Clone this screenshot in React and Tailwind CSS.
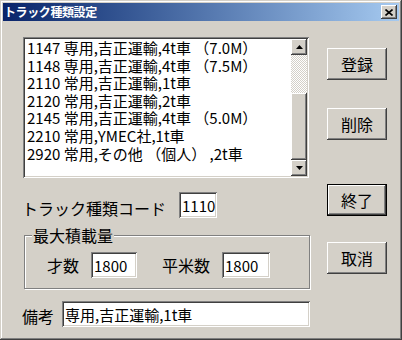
import React from "react";

const sunken =
  "shadow-[inset_1px_1px_0_#808080,inset_-1px_-1px_0_#ffffff,inset_2px_2px_0_#404040,inset_-2px_-2px_0_#d4d0c8]";
const raised =
  "shadow-[inset_-1px_-1px_0_#404040,inset_1px_1px_0_#ffffff,inset_-2px_-2px_0_#808080,inset_2px_2px_0_#d4d0c8]";

const items = [
  "1147 専用,吉正運輸,4t車 （7.0M）",
  "1148 専用,吉正運輸,4t車 （7.5M）",
  "2110 常用,吉正運輸,1t車",
  "2120 常用,吉正運輸,2t車",
  "2145 常用,吉正運輸,4t車 （5.0M）",
  "2210 常用,YMEC社,1t車",
  "2920 常用,その他 （個人） ,2t車",
];

function Field({ w, children }) {
  return (
    <div
      className={`${sunken} bg-white h-[26px] flex items-center pl-[3px] text-[15px] leading-none text-black ${w}`}
    >
      {children}
    </div>
  );
}

function Btn({ label, def, className }) {
  if (def) {
    return (
      <div className={`w-[60px] h-[32px] border border-black ${className}`}>
        <div className={`${raised} bg-[#d4d0c8] w-full h-full flex items-center justify-center text-[16px] leading-none`}>
          {label}
        </div>
      </div>
    );
  }
  return (
    <div
      className={`${raised} bg-[#d4d0c8] w-[60px] h-[32px] flex items-center justify-center text-[16px] leading-none ${className}`}
    >
      {label}
    </div>
  );
}

function Arrow({ up }) {
  return (
    <div className={`${raised} bg-[#d4d0c8] w-[16px] h-[16px] flex items-center justify-center`}>
      <svg width="7" height="4" viewBox="0 0 7 4">
        {up ? <polygon points="3.5,0 7,4 0,4" fill="#000" /> : <polygon points="0,0 7,0 3.5,4" fill="#000" />}
      </svg>
    </div>
  );
}

export default function App() {
  return (
    <div
      className="w-[402px] h-[340px] bg-[#d4d0c8] p-[3px] flex flex-col text-black shadow-[inset_-1px_-1px_0_#404040,inset_1px_1px_0_#d4d0c8,inset_-2px_-2px_0_#808080,inset_2px_2px_0_#ffffff]"
      style={{ fontFamily: '"Noto Sans CJK JP", "Noto Sans", sans-serif' }}
    >
      {/* title bar */}
      <div className="h-[18px] bg-linear-to-r from-[#0a246a] to-[#a6caf0] flex items-center justify-between pl-[1px] pr-[2px]">
        <span className="text-white font-bold text-[12px] leading-none tracking-[-0.4px]">トラック種類設定</span>
        <div className={`${raised} bg-[#d4d0c8] w-[16px] h-[14px] flex items-center justify-center`}>
          <svg width="8" height="7" viewBox="0 0 8 7">
            <path d="M0.5 0.5 L7.5 6.5 M7.5 0.5 L0.5 6.5" stroke="#000" strokeWidth="1.6" />
          </svg>
        </div>
      </div>

      {/* body */}
      <div className="flex flex-1">
        {/* left column */}
        <div className="w-[310px] flex flex-col pl-[20px]">
          {/* listbox */}
          <div className={`${sunken} mt-[16px] w-[286px] h-[141px] bg-white p-[2px] flex`}>
            <div className="flex-1 pl-[2px] text-[15px] leading-[17.6px] whitespace-nowrap">
              {items.map((t) => (
                <div key={t} className="h-[17.6px]">{t}</div>
              ))}
            </div>
            <div className="w-[16px] flex flex-col">
              <Arrow up />
              <div className="h-[38px] bg-[repeating-conic-gradient(#ffffff_0_25%,#d4d0c8_0_50%)] bg-[length:2px_2px]" />
              <div className={`${raised} bg-[#d4d0c8] flex-1`} />
              <Arrow />
            </div>
          </div>

          {/* code row */}
          <div className="flex items-end mt-[14px] -ml-[1px]">
            <div className="w-[157px] text-[16px] leading-none pb-[2px]">トラック種類コード</div>
            <Field w="w-[38px]">1110</Field>
          </div>

          {/* group box */}
          <div className="relative mt-[17px] ml-[1px] w-[286px] h-[54px] border border-[#808080] shadow-[inset_1px_1px_0_#ffffff,1px_1px_0_#ffffff]">
            <div className="absolute -top-[9px] left-[7px] bg-[#d4d0c8] px-[1px] text-[16px] leading-none">
              最大積載量
            </div>
            <div className="flex items-center mt-[16px] pl-[22px]">
              <span className="w-[44px] text-[16px] leading-none">才数</span>
              <Field w="w-[46px]">1800</Field>
              <span className="ml-[25px] w-[60px] text-[16px] leading-none">平米数</span>
              <Field w="w-[48px]">1800</Field>
            </div>
          </div>

          {/* remarks */}
          <div className="flex items-center mt-[12px] -ml-[1px]">
            <span className="w-[40px] text-[16px] leading-none pt-[3px]">備考</span>
            <Field w="w-[248px]">専用,吉正運輸,1t車</Field>
          </div>
        </div>

        {/* right column */}
        <div className="flex flex-col ml-[14px]">
          <Btn label="登録" className="mt-[27px]" />
          <Btn label="削除" className="mt-[28px]" />
          <Btn label="終了" def className="mt-[44px]" />
          <Btn label="取消" className="mt-[26px]" />
        </div>
      </div>
    </div>
  );
}
